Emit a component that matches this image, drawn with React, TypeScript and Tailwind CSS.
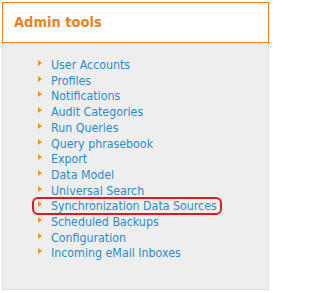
import React from "react";

const items = [
  "User Accounts",
  "Profiles",
  "Notifications",
  "Audit Categories",
  "Run Queries",
  "Query phrasebook",
  "Export",
  "Data Model",
  "Universal Search",
  "Synchronization Data Sources",
  "Scheduled Backups",
  "Configuration",
  "Incoming eMail Inboxes",
];

const Arrow = () => (
  <svg width="4" height="6" viewBox="0 0 4 6" className="absolute left-[-13px] top-[2px]">
    <path d="M0 0 L4 3 L0 6 Z" fill="#f0931c" />
  </svg>
);

const App = () => {
  return (
    <div className="w-[271px] h-[293px] bg-white p-[2px] font-['DejaVu_Sans_Condensed','DejaVu_Sans',sans-serif]">
      {/* Header */}
      <div className="h-[41px] border border-[#f08020] bg-white flex items-center pl-[11px]">
        <span className="text-[14.5px] font-bold text-[#f07f1e] mt-[1px]">Admin tools</span>
      </div>

      {/* Body */}
      <div className="h-[247px] border border-t-0 border-[#dcdcdc] bg-[#eeeeee] pt-[15px] pl-[48px]">
        <ul className="text-[12.3px] leading-[15.7px] text-[#2a8bcb]">
          {items.map((item) => (
            <li key={item} className="relative">
              <Arrow />
              {item === "Synchronization Data Sources" && (
                <span className="absolute left-[-19px] top-[-2px] w-[190px] h-[18px] border-2 border-[#e8141c] rounded-[6px]" />
              )}
              <span className="relative">{item}</span>
            </li>
          ))}
        </ul>
      </div>
    </div>
  );
};

export default App;
